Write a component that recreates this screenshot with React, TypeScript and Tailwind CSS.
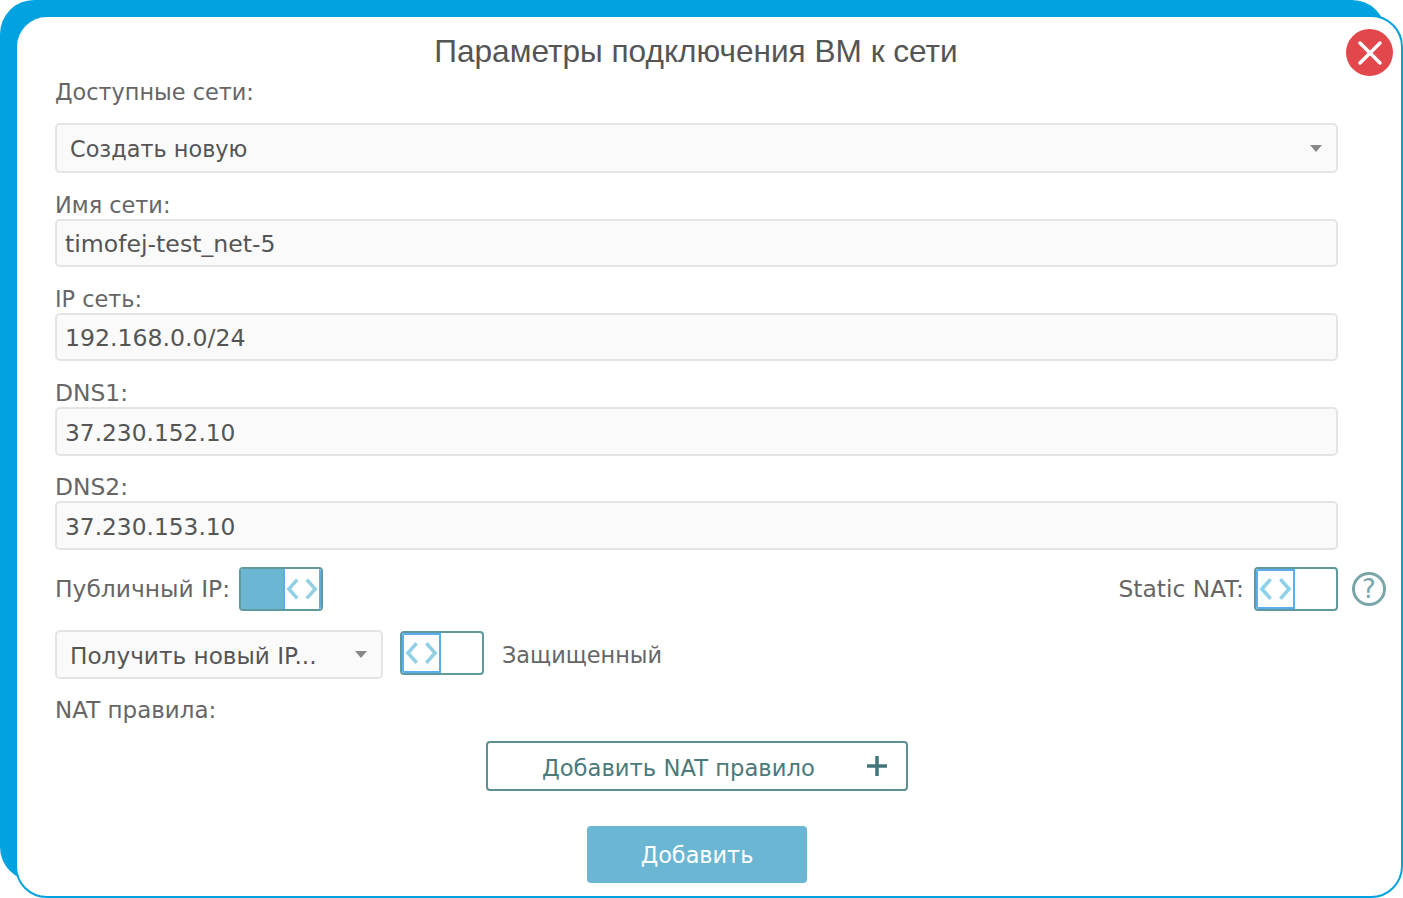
const labelText = "text-[#666] text-[22.4px] leading-[28px]"
const latinLabel = "text-[#666] text-[23.4px] leading-[28px]"

const Chevrons = () => (
  <svg width="36" height="26" viewBox="0 0 36 26" fill="none" stroke="#8fd0e6" strokeWidth="3.6">
    <polyline points="13,3 4,13 13,23" />
    <polyline points="23,3 32,13 23,23" />
  </svg>
)

const Toggle = ({ on }: { on?: boolean }) => (
  <div className="flex h-[44px] w-[84px] shrink-0 overflow-hidden rounded-[4px] border-2 border-[#5e9a9e] bg-white">
    {on && <div className="w-[42px] bg-[#6ab6d3]" />}
    <div
      className={
        on
          ? "flex w-[38px] items-center justify-center border-l-2 border-r-2 border-[#5aaef0] bg-white"
          : "flex w-[39px] items-center justify-center rounded-l-[2px] border-2 border-[#5aaef0] bg-white"
      }
    >
      <Chevrons />
    </div>
  </div>
)

const Caret = () => (
  <div className="h-0 w-0 border-x-[6px] border-t-[7px] border-x-transparent border-t-[#888]" />
)

type FieldProps = { label: string; value: string; mt: string; h: string; labelClass: string; size: string }

const Field = ({ label, value, mt, h, labelClass, size }: FieldProps) => (
  <div className={mt}>
    <div className={`pt-[1px] ${labelClass}`}>{label}</div>
    <div className={`flex w-[1283px] items-center rounded-[5px] border-2 border-[#e4e4e4] bg-[#fafafa] pl-[8px] pt-[4px] text-[#555] ${size} ${h}`}>
      {value}
    </div>
  </div>
)

export default function App() {
  return (
    <div className="relative h-[898px] w-[1403px] overflow-hidden bg-white pl-[15px] pt-[15px]" style={{ fontFamily: '"DejaVu Sans", sans-serif' }}>
      <div className="absolute left-0 top-0 h-[881px] w-[1386px] rounded-[34px] bg-[#00a2e0]" />
      <div className="relative h-[883px] w-[1388px] rounded-[32px] border-2 border-[#00a2e0] bg-white pl-[38px]">
        <div className="relative">
          <h1 className="ml-[-38px] w-[1358px] pt-[16px] text-center text-[31.6px] leading-[36px] text-[#555]" style={{ fontFamily: '"Liberation Sans", sans-serif' }}>
            Параметры подключения ВМ к сети
          </h1>
          <button className="absolute right-[8px] top-[12px] flex h-[47px] w-[47px] items-center justify-center rounded-full bg-[#e2474b]">
            <svg width="28" height="28" viewBox="0 0 28 28" stroke="#fff" strokeWidth="3.5" strokeLinecap="round">
              <line x1="4" y1="4" x2="24" y2="24" />
              <line x1="24" y1="4" x2="4" y2="24" />
            </svg>
          </button>
        </div>

        <div className={`mt-[9px] ${labelText}`}>Доступные сети:</div>
        <div className="mt-[17px] flex h-[50px] w-[1283px] items-center justify-between rounded-[5px] border-2 border-[#e4e4e4] bg-[#fafafa] pl-[13px] pr-[14px] text-[22.4px] text-[#555]">
          <span className="pt-[3px]">Создать новую</span>
          <Caret />
        </div>

        <Field label="Имя сети:" value="timofej-test_net-5" mt="mt-[17px]" h="h-[48px]" labelClass={labelText} size="text-[23.6px]" />
        <Field label="IP сеть:" value="192.168.0.0/24" mt="mt-[17px]" h="h-[48px]" labelClass={labelText} size="text-[23.6px]" />
        <Field label="DNS1:" value="37.230.152.10" mt="mt-[17px]" h="h-[49px]" labelClass={latinLabel} size="text-[23.3px]" />
        <Field label="DNS2:" value="37.230.153.10" mt="mt-[16px]" h="h-[49px]" labelClass={latinLabel} size="text-[23.3px]" />

        <div className="mt-[17px] flex h-[44px] w-[1331px] items-center justify-between">
          <div className="flex items-center gap-[9px]">
            <span className={latinLabel}>Публичный IP:</span>
            <Toggle on />
          </div>
          <div className="flex items-center">
            <span className={`mr-[10px] ${latinLabel}`}>Static NAT:</span>
            <Toggle />
            <div className="ml-[14px] flex h-[34px] w-[34px] items-center justify-center rounded-full border-[3px] border-[#7aa5a9] text-[26px] text-[#7aa5a9]">
              ?
            </div>
          </div>
        </div>

        <div className="mt-[19px] flex items-start">
          <div className="flex h-[49px] w-[328px] items-center justify-between rounded-[5px] border-2 border-[#e4e4e4] bg-[#fafafa] pl-[13px] pr-[14px] text-[23.2px] text-[#555]">
            <span className="pt-[3px]">Получить новый IP...</span>
            <Caret />
          </div>
          <div className="ml-[17px] mt-[1px]">
            <Toggle />
          </div>
          <span className={`ml-[18px] mt-[11px] ${labelText}`}>Защищенный</span>
        </div>

        <div className="mt-[16px] pt-[1px] text-[23px] leading-[28px] text-[#666]">NAT правила:</div>

        <div className="mt-[17px] ml-[431px] flex h-[50px] w-[422px] items-center justify-between rounded-[4px] border-2 border-[#5e8f92] bg-white pl-[54px] pr-[18px] text-[22.7px] text-[#4a7a7c]">
          <span className="pt-[4px]">Добавить NAT правило</span>
          <svg width="22" height="22" viewBox="0 0 22 22" stroke="#40767a" strokeWidth="3.5">
            <line x1="11" y1="1" x2="11" y2="21" />
            <line x1="1" y1="11" x2="21" y2="11" />
          </svg>
        </div>

        <button className="mt-[35px] ml-[532px] block h-[57px] w-[220px] rounded-[4px] bg-[#6ab6d3] pt-[2px] text-[22.4px] text-white">
          Добавить
        </button>
      </div>
    </div>
  )
}
